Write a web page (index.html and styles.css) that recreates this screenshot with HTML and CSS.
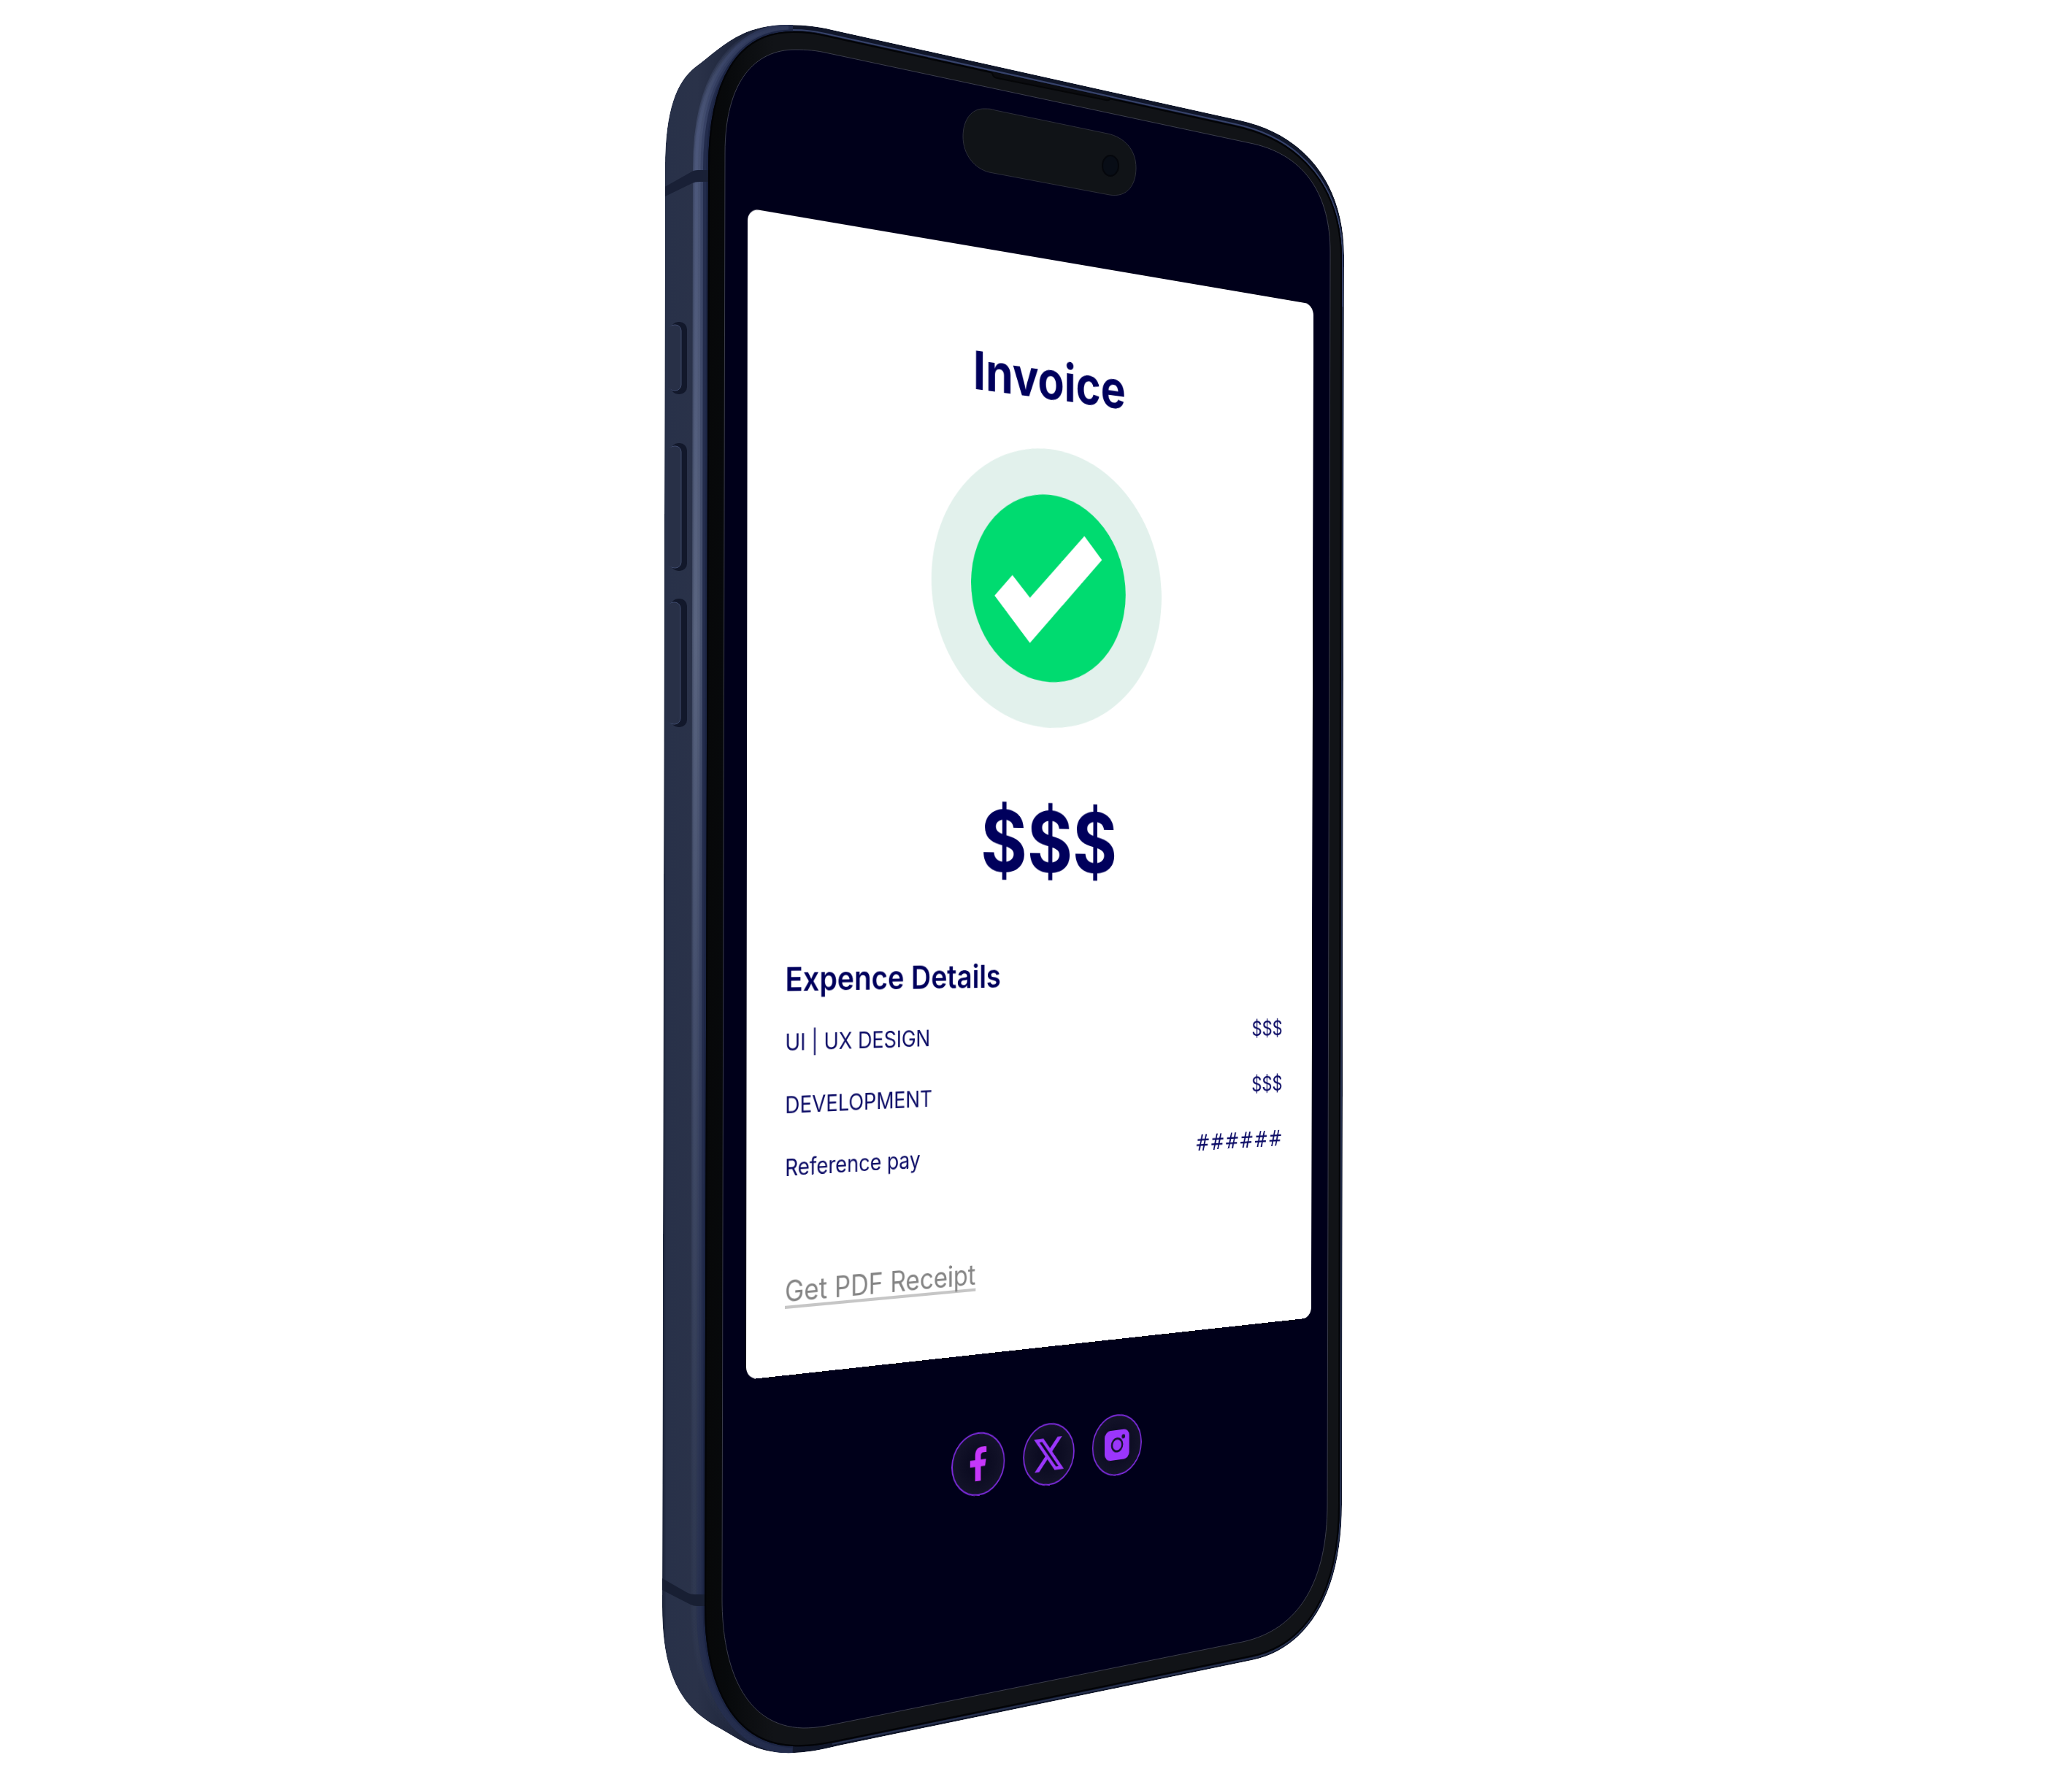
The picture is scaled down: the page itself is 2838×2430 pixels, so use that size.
FILE: index.html
```html
<!DOCTYPE html>
<html lang="en">
<head>
  <meta charset="utf-8">
  <meta name="viewport" content="width=device-width, initial-scale=1">
  <title>Invoice</title>
  <link rel="stylesheet" href="styles.css">
</head>
<body>
  <main class="phone">
    <svg class="phone__body" viewBox="900 20 1038 2390" aria-hidden="true">
      <defs>
        <linearGradient id="rail" gradientUnits="userSpaceOnUse" x1="907" y1="0" x2="1100" y2="0">
          <stop offset="0" stop-color="#1b2338"/>
          <stop offset=".03" stop-color="#283149"/>
          <stop offset=".25" stop-color="#2a3249"/>
          <stop offset=".6" stop-color="#1b2238"/>
          <stop offset="1" stop-color="#101629"/>
        </linearGradient>
        <linearGradient id="shine" gradientUnits="userSpaceOnUse" x1="0" y1="40" x2="0" y2="2400">
          <stop offset="0" stop-color="#4f5b80" stop-opacity=".1"/>
          <stop offset=".06" stop-color="#4f5b80" stop-opacity=".5"/>
          <stop offset=".35" stop-color="#5d6884" stop-opacity=".6"/>
          <stop offset=".55" stop-color="#4a5574" stop-opacity=".5"/>
          <stop offset=".85" stop-color="#343e58" stop-opacity=".3"/>
          <stop offset="1" stop-color="#343e58" stop-opacity="0"/>
        </linearGradient>
        <linearGradient id="bezel" gradientUnits="userSpaceOnUse" x1="966" y1="0" x2="1060" y2="0">
          <stop offset="0" stop-color="#070809"/>
          <stop offset=".3" stop-color="#07090b"/>
          <stop offset="1" stop-color="#111317"/>
        </linearGradient>
        <linearGradient id="floor" x1="0" y1="0" x2="0" y2="1">
          <stop offset=".6" stop-color="#0b0d10" stop-opacity="0"/>
          <stop offset="1" stop-color="#0b0d10"/>
        </linearGradient>
        <clipPath id="outline">
          <path id="silhouette" d="M911 230C911 150 927 112 952 92C985 68 1012 34 1078 34C1105 34 1125 37 1149 43L1699 165C1790 185 1841 255 1841 350L1838 2060C1838 2185 1790 2258 1715 2274L1149 2391C1120 2398 1100 2402 1071 2401C1032 2399 1010 2381 985 2367C930 2338 907 2290 907 2200Z"/>
        </clipPath>
      </defs>
      <g clip-path="url(#outline)">
        <use href="#silhouette" fill="url(#rail)"/>
        <path fill="none" stroke="#232c4c" stroke-width="24" d="M1086 2391C1005 2388 966 2310 966 2200L971 230C971 110 1010 44 1086 44"/>
        <g fill="none" stroke="url(#shine)">
          <path stroke-width="14" d="M1060 2396C990 2382 953 2310 953 2200L956 230C956 112 1000 42 1080 38"/>
          <path stroke-width="9" d="M1060 2396C990 2382 952 2310 952 2200L955 230C955 112 1000 42 1080 38"/>
          <path stroke-width="4" d="M1060 2396C990 2382 951 2310 951 2200L954 230C954 112 1000 42 1080 38"/>
        </g>
        <path fill="none" stroke="#1c2544" stroke-width="7" d="M1086 2391C1005 2388 966 2310 966 2200L971 230C971 110 1010 44 1086 44"/>
        <path fill="none" stroke="#36426a" stroke-width="2" d="M1086 41C1105 41 1115 43 1130 46L1692 170C1785 190 1839 258 1839 355V420"/>
        <path fill="none" stroke="#27314f" stroke-width="2" d="M1839 420L1836 2060C1836 2180 1790 2255 1716 2271L1140 2389"/>
        <path fill="#192036" d="M907 258L946 236Q950 233 956 233H972V249H958Q952 249 948 251L907 271Z"/>
        <path fill="#181f33" d="M907 2162L942 2182Q946 2184 951 2184H968V2200H955Q950 2200 946 2198L907 2178Z"/>
      </g>
      <g fill="#12182b">
        <rect x="919" y="441" width="22" height="99" rx="10"/>
        <rect x="919" y="607" width="22" height="175" rx="10"/>
        <rect x="919" y="820" width="22" height="176" rx="10"/>
      </g>
      <g fill="#283047" stroke="#3f4b6d">
        <rect x="916" y="445" width="17" height="90" rx="8"/>
        <rect x="916" y="611" width="17" height="167" rx="8"/>
        <rect x="915" y="825" width="17" height="167" rx="8"/>
      </g>
      <g fill="#283047">
        <rect x="915" y="446" width="15" height="88" rx="7"/>
        <rect x="915" y="612" width="15" height="165" rx="7"/>
        <rect x="914" y="826" width="15" height="165" rx="7"/>
      </g>
      <path id="glass" fill="url(#bezel)" stroke="#030407" stroke-width="2" d="M971 230C971 110 1010 44 1086 44C1105 44 1115 46 1130 49L1692 173C1785 193 1837 260 1837 355L1834 2060C1834 2180 1790 2252 1716 2268L1140 2386C1120 2390 1105 2392 1086 2391C1005 2388 966 2310 966 2200Z"/>
      <use href="#glass" style="fill:url(#floor)"/>
      <path fill="#0b0c10" stroke="#050608" stroke-width="2" d="M1358 98L1360 103Q1361 106 1366 107L1515 137Q1520 138 1521 134"/>
      <path fill="#00001a" stroke="#3b3d4c" d="M993 210C993 110 1035 68 1089 68C1105 68 1118 69 1135 73L1717 197C1790 214 1822 270 1822 345L1818 2060C1818 2165 1780 2232 1702 2249L1152 2360C1132 2364 1120 2367 1100 2367C1020 2365 989 2285 989 2190Z"/>
      <path fill="#101317" stroke="#2c2e3a" d="M1349 149C1330 148 1319 165 1319 187C1319 212 1335 231 1355 236L1520 267C1545 271 1556 252 1556 230C1556 205 1540 188 1517 183L1363 151C1358 149 1354 149 1349 149Z"/>
      <ellipse cx="1521" cy="227" rx="11" ry="14" fill="#080d16" stroke="#05070c" stroke-width="2"/>
    </svg>

    <div class="screen">
      <section class="invoice">
        <h1 class="invoice__title">Invoice</h1>
        <svg class="invoice__badge" viewBox="0 0 386 386" role="img" aria-label="Paid">
          <circle cx="192" cy="193" r="192" fill="#e2f1ec"/>
          <circle cx="192" cy="193" r="129" fill="#00db70"/>
          <path fill="#fff" d="M101 209L130 179L159 208L250 116L280 147L159 270Z"/>
        </svg>
        <p class="invoice__total">$$$</p>
        <h2 class="invoice__subtitle">Expence Details</h2>
        <table class="expenses">
          <tbody>
            <tr><th scope="row">UI | UX DESIGN</th><td>$$$</td></tr>
            <tr><th scope="row">DEVELOPMENT</th><td>$$$</td></tr>
            <tr><th scope="row">Reference pay</th><td class="expenses__code">######</td></tr>
          </tbody>
        </table>
        <a class="invoice__receipt" href="#receipt">Get PDF Receipt</a>
      </section>

      <nav class="social" aria-label="Social media">
        <a class="social__link social__link--facebook" href="#facebook" aria-label="Facebook">
          <svg width="28" height="46" viewBox="6.500 2 11.500 20"><path d="M14 13.500h3l.7-4H14v-2c0-1.030 0-2 2-2h2V2.140C17.200 2.050 16 2 14.643 2 11.928 2 10 3.657 10 6.700v2.800H6.500v4H10V22h4z"/></svg>
        </a>
        <a class="social__link" href="#x" aria-label="X">
          <svg width="50" height="50" viewBox="0 0 16 16"><path d="M12.600.750h2.454l-5.360 6.142L16 15.250h-4.937l-3.867-5.070-4.425 5.070H.316l5.733-6.570L0 .750h5.063l3.495 4.633zm-.860 13.028h1.360L4.323 2.145H2.865z"/></svg>
        </a>
        <a class="social__link" href="#instagram" aria-label="Instagram">
          <svg width="42" height="42" viewBox="0 0 42 42"><rect width="42" height="42" rx="9"/><circle cx="21" cy="21" r="9" fill="none" stroke="#14142c" stroke-width="3"/><circle cx="32" cy="10" r="3" fill="#14142c"/></svg>
        </a>
      </nav>
    </div>
  </main>
</body>
</html>
```
FILE: styles.css
```css
* {
  box-sizing: border-box;
}

body {
  display: grid;
  place-items: center;
  min-height: 100vh;
  margin: 0;
  background: #fff;
  color: #00005c;
  font-family: Inter, "Open Sans", sans-serif;
}

.phone {
  position: relative;
  width: 1038px;
}

.phone__body {
  display: block;
  width: 100%;
}

/* The screen content lies on the glass, turned away from the viewer with it.
   The padding keeps the card's edges inside the layer, so they stay smooth. */
.screen {
  position: absolute;
  top: -20px;
  left: -20px;
  width: 980px;
  padding: 20px;
  transform-origin: 20px 20px;
  transform: matrix3d(
    0.973989, 0.20645, 0, 0.00016632,
    -0.0011787, 1.073035, 0, 0.0000012653,
    0, 0, 1, 0,
    124, 265, 0, 1);
}

.invoice {
  display: flex;
  flex-direction: column;
  align-items: center;
  padding: 126px 56px 86px;
  border-radius: 16px;
  background: #fff;
}

.invoice__title {
  margin: 0;
  font-size: 72px;
  font-weight: 700;
  line-height: 80px;
}

.invoice__badge {
  width: 386px;
  height: 386px;
  margin-top: 54px;
}

.invoice__total {
  margin: 96px 0 0;
  font-size: 116px;
  font-weight: 700;
  line-height: 120px;
}

.invoice__subtitle {
  align-self: flex-start;
  margin: 100px 0 0;
  font-size: 43px;
  font-weight: 600;
  line-height: 48px;
}

.expenses {
  width: 100%;
  margin-top: 40px;
  border-collapse: collapse;
  color: #0c0c66;
  font-size: 30px;
  line-height: 36px;
}

.expenses th,
.expenses td {
  padding: 0 0 45px;
  font-weight: 400;
  text-align: left;
}

.expenses td {
  text-align: right;
}

.expenses .expenses__code {
  font-family: "DejaVu Sans", sans-serif;
  font-size: 32px;
}

.invoice__receipt {
  align-self: flex-start;
  margin-top: 74px;
  color: #858585;
  font-size: 38px;
  font-weight: 400;
  line-height: 46px;
  text-decoration: underline 4px #c6c6c6;
  text-decoration-skip-ink: none;
  text-underline-offset: 5px;
}

.social {
  display: flex;
  justify-content: center;
  gap: 30px;
  margin-top: 106px;
}

.social__link {
  display: grid;
  place-items: center;
  width: 86px;
  height: 86px;
  border: 2px solid #7d2bdc;
  border-radius: 50%;
  background: radial-gradient(#0c0c22 30%, #18182e);
  fill: #9b36fb;
}

.social__link--facebook {
  fill: #c637fb;
}
```
